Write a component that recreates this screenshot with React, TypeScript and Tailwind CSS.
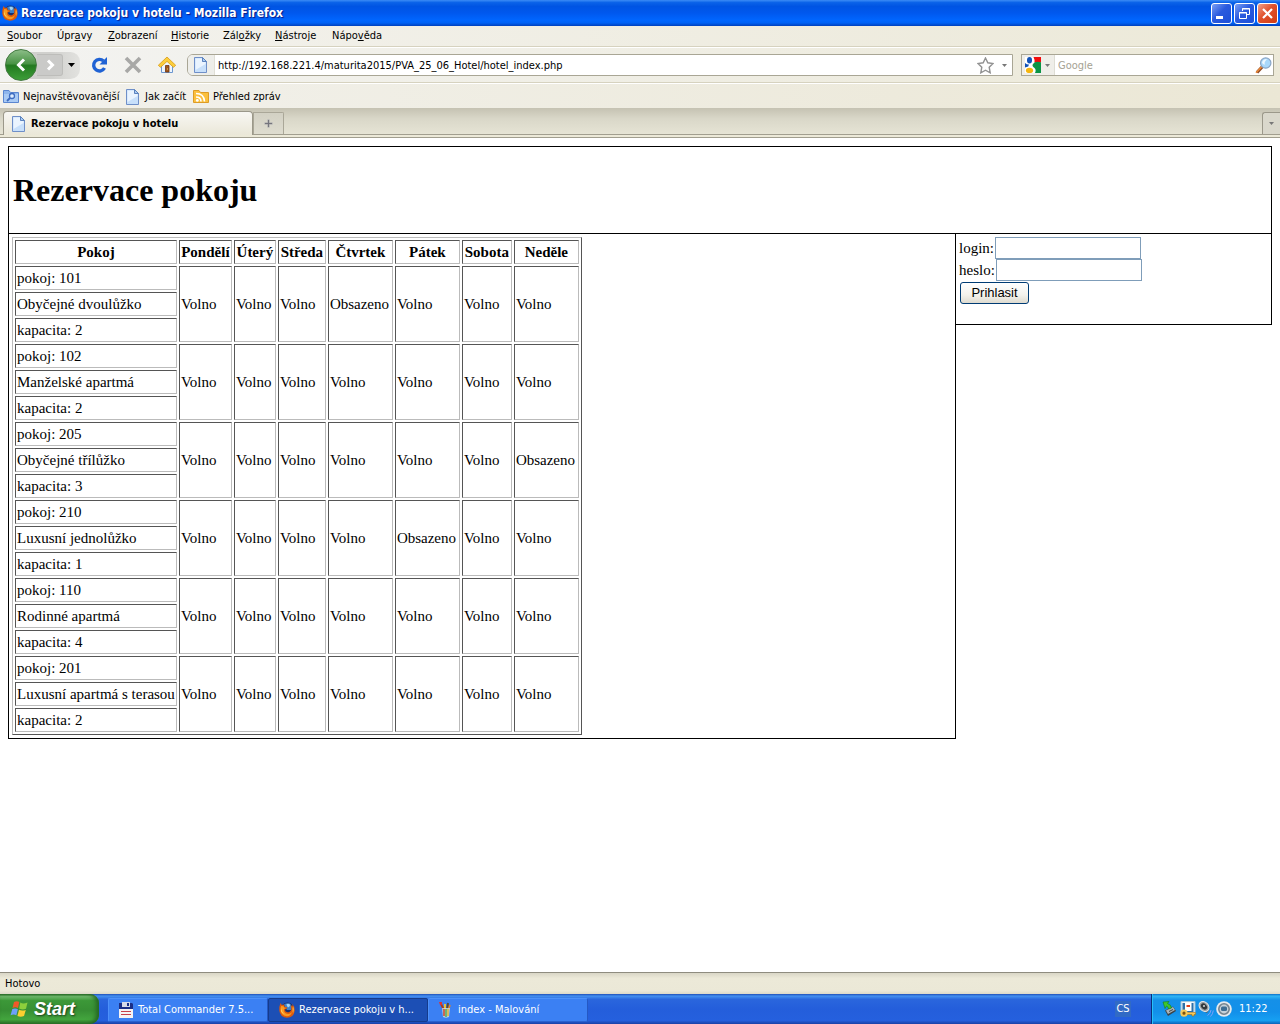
import React from "react";

const days = ["Pondělí", "Úterý", "Středa", "Čtvrtek", "Pátek", "Sobota", "Neděle"];

const rooms = [
  { number: 101, name: "Obyčejné dvoulůžko", capacity: 2, taken: [3] },
  { number: 102, name: "Manželské apartmá", capacity: 2, taken: [] },
  { number: 205, name: "Obyčejné třílůžko", capacity: 3, taken: [6] },
  { number: 210, name: "Luxusní jednolůžko", capacity: 1, taken: [4] },
  { number: 110, name: "Rodinné apartmá", capacity: 4, taken: [] },
  { number: 201, name: "Luxusní apartmá s terasou", capacity: 2, taken: [] },
] as { number: number; name: string; capacity: number; taken: number[] }[];

function FirefoxIcon() {
  return (
    <svg className="size-4 shrink-0" viewBox="0 0 16 16" aria-hidden="true">
      <circle cx="8.500" cy="7" r="6.500" fill="#17306f" />
      <path d="M5 2.500 Q8 .3 11.500 2 L13 5 L12 8 L8 8 L6 5Z" fill="#3a7fc8" />
      <path d="M7.500 2 L10.500 1.700 L11 4 L9 5.500 L8 4Z" fill="#9fd6f8" />
      <path d="M1.500 1 L2.800 3 L5 2.600 L5.500 4.500 L8.300 5.500 L7.500 7 L5.800 7.500 Q6 10 8.500 10.300 Q11.500 10.400 12.300 7.500 Q12.500 5 11.500 3 L13.500 4.500 L13.300 1.800 Q16 5 15.700 8.800 Q14.800 15.600 8 15.800 Q1 15.200 .3 8.500 Q0 4.500 1.500 1Z" fill="#dd5a0c" />
      <path d="M2.200 4 L4.600 4.200 L5 5.500 L7 6 L5 7 Q4.500 10 7 11.500 Q10.500 12.800 13 10 Q11.500 14.300 8 14.300 Q3 14 1.600 9 Q1.200 6 2.200 4Z" fill="#f99a22" />
      <path d="M2.300 6 Q2.600 10.500 6 12.800 Q3 12 2 9Z" fill="#ffd868" />
      <path d="M14 4 Q15.400 7 14.200 11 Q13.500 10 13.600 7 Z" fill="#ffd04c" />
    </svg>
  );
}

function PageIcon() {
  return (
    <svg className="size-4 shrink-0" viewBox="0 0 16 16" aria-hidden="true">
      <path d="M1.500 .5 H9.500 L13.500 4.500 V15.500 H1.500Z" fill="#c8e0fb" stroke="#6f8fc8" />
      <path d="M2.500 1.500 H9 V5 H12.500 V7 L2.500 13Z" fill="#eaf4ff" />
      <path d="M9.500 .5 V4.500 H13.500Z" fill="#a9cdf5" stroke="#5c82bd" />
    </svg>
  );
}

function FolderSearchIcon() {
  return (
    <svg className="size-4 shrink-0" viewBox="0 0 16 16" aria-hidden="true">
      <path d="M.5 1.500 H6 L7.500 3.500 H15.500 V13.500 H.5Z" fill="#8fb6ec" stroke="#5a86d0" />
      <path d="M1 5 H15 V13 H1Z" fill="#a9caf4" />
      <circle cx="9" cy="7" r="2.500" fill="#dcecff" stroke="#3d6cc0" strokeWidth="1.300" />
      <path d="M7 9 L4 12" stroke="#3d6cc0" strokeWidth="1.800" />
    </svg>
  );
}

function FeedIcon() {
  return (
    <svg className="size-4 shrink-0" viewBox="0 0 16 16" aria-hidden="true">
      <path d="M.5 1.500 H6 L7.500 3.500 H15.500 V13.500 H.5Z" fill="#fbc03e" stroke="#dd9c26" />
      <path d="M3 4.500 Q11 4.500 11.500 12.500 M3 8 Q8 8 8 12.500" fill="none" stroke="#fff" strokeWidth="1.600" />
      <circle cx="4.300" cy="11.400" r="1.400" fill="#fff" />
    </svg>
  );
}

function HomeIcon() {
  return (
    <svg className="h-[18px] w-[18px]" viewBox="0 0 18 18" aria-hidden="true">
      <path d="M3.500 9 V16.500 H14.500 V9 L9 4Z" fill="#eef5fd" stroke="#6c97cf" />
      <path d="M9 1 L17.700 9.300 L15.500 11.300 L9 5.400 L2.500 11.300 L.3 9.300Z" fill="#fcce3b" stroke="#d79a17" strokeWidth=".8" />
      <path d="M7.500 9.500 H11 V16 H7.500Z" fill="#a0561d" stroke="#6f3510" strokeWidth=".8" />
      <path d="M9 13 h1" stroke="#ffd04a" />
    </svg>
  );
}

function ReloadIcon() {
  return (
    <svg className="h-[18px] w-[18px]" viewBox="0 0 18 18" aria-hidden="true">
      <path d="M13.500 5 A5.800 5.800 0 1 0 14.500 12" fill="none" stroke="#1f62d4" strokeWidth="3.400" />
      <path d="M17 1 V8.500 H9.500Z" fill="#1f62d4" />
    </svg>
  );
}

function StopIcon() {
  return (
    <svg className="h-[18px] w-[18px]" viewBox="0 0 18 18" aria-hidden="true">
      <path d="M2 2 L16 16 M16 2 L2 16" stroke="#a8a8a6" strokeWidth="3.600" />
    </svg>
  );
}

function Chevron({ left = false }: { left?: boolean }) {
  return (
    <svg className="size-4" viewBox="0 0 16 16" aria-hidden="true">
      <path d={left ? "M11 2.500 L5.500 8 L11 13.500" : "M6 3.500 L10.500 8 L6 12.500"} fill="none" stroke="#fff" strokeWidth="3" />
    </svg>
  );
}

function Caret({ className = "h-1 w-[7px]" }: { className?: string }) {
  return (
    <svg className={className} viewBox="0 0 7 4" aria-hidden="true">
      <path d="M0 0 H7 L3.500 4Z" fill="currentColor" />
    </svg>
  );
}

function StarIcon() {
  return (
    <svg className="h-[17px] w-[17px]" viewBox="0 0 17 17" aria-hidden="true">
      <path d="M8.500 1 L10.800 5.800 L16 6.500 L12.200 10.200 L13.200 15.800 L8.500 13.200 L3.800 15.800 L4.800 10.200 L1 6.500 L6.200 5.800Z" fill="#fff" stroke="#929292" strokeWidth="1.400" />
    </svg>
  );
}

function GoogleIcon() {
  return (
    <svg className="size-4" viewBox="0 0 16 16" aria-hidden="true">
      <path d="M0 0H16V16H0Z" fill="#fff" />
      <path d="M8.500 0 H16 V5.500 H9.500 Q10 3 8.500 0Z" fill="#f20d0d" />
      <path d="M9.500 5.500 Q12 4 16 5.300 V16 H10 Q11.500 13 9.500 11 Q6.500 9 8 7Z" fill="#0a9445" />
      <ellipse cx="4.500" cy="3.200" rx="2.500" ry="3.200" fill="#1152b8" />
      <path d="M0 6 Q2 7.800 4 7.600 L3.200 9.400 L0 10.500Z" fill="#1152b8" />
      <ellipse cx="4.500" cy="13.400" rx="3.600" ry="2.600" fill="#f5b50f" />
    </svg>
  );
}

function MagnifierIcon() {
  return (
    <svg className="h-[17px] w-[17px]" viewBox="0 0 17 17" aria-hidden="true">
      <path d="M7.500 9.500 L2 15.500" stroke="#8a4420" strokeWidth="3.200" />
      <path d="M7 9.500 L1 15.800" stroke="#e8893a" strokeWidth="1.600" />
      <circle cx="10.700" cy="6" r="5.200" fill="#a9d8fb" stroke="#8ba6c6" strokeWidth="1.200" />
      <path d="M7 6 Q7.500 2 12 2 Q9.500 4 9.500 8Z" fill="#eef8ff" />
    </svg>
  );
}

function WindowsFlag() {
  return (
    <svg className="h-[18px] w-[19px]" viewBox="0 0 19 18" aria-hidden="true">
      <path d="M4 2 Q7 .3 9.300 2 L8 8 Q5.500 6.600 2.500 8Z" fill="#f0592a" />
      <path d="M10.300 2.600 Q13 4.300 17.500 2.600 L16 8.800 Q12.500 10.200 9.200 8.600Z" fill="#8ccf3c" />
      <path d="M2.300 9 Q5.300 7.700 7.900 9.200 L6.300 15.300 Q3.600 13.800 .6 15.300Z" fill="#6da0fa" />
      <path d="M9 9.800 Q12 11.300 15.800 9.900 L14 16 Q10.600 17.500 7.400 15.900Z" fill="#fbcf30" />
    </svg>
  );
}

function FloppyIcon() {
  return (
    <svg className="size-4 shrink-0" viewBox="0 0 16 16" aria-hidden="true">
      <path d="M1 1H14L15 2V15H1Z" fill="#1b2f86" />
      <path d="M4 0H12V5H4Z" fill="#d7dce8" />
      <path d="M9 1H11V4H9Z" fill="#1b2f86" />
      <path d="M1 7H15V16H1Z" fill="#f6f3f3" />
      <path d="M3 9.500H13M3 12.500H13" stroke="#c8404a" />
    </svg>
  );
}

function PaintIcon() {
  return (
    <svg className="size-4 shrink-0" viewBox="0 0 16 16" aria-hidden="true">
      <path d="M6 8 L3 2" stroke="#aa3c1c" strokeWidth="2" />
      <path d="M1 0h3v3H2Z" fill="#d33" />
      <path d="M7 8 L7 2" stroke="#e7c23e" strokeWidth="2" />
      <path d="M9 8 L10 1" stroke="#5b4a38" strokeWidth="2" />
      <path d="M10 9 L12 3" stroke="#e78323" strokeWidth="1.600" />
      <path d="M4 6H12L11 15Q8 16.500 5 15Z" fill="#c9d7df" fillOpacity=".85" />
      <path d="M6 7V14" stroke="#d54625" strokeWidth="1.500" />
      <path d="M8 7V15" stroke="#48a83f" strokeWidth="1.300" />
      <path d="M10 7V14" stroke="#e6b830" strokeWidth="1.500" />
    </svg>
  );
}

function SafeRemoveIcon() {
  return (
    <svg className="size-4" viewBox="0 0 16 16" aria-hidden="true">
      <path d="M3 9.500 L11 5.500 L14 10 L6 15Z" fill="#3b4449" />
      <path d="M4 9.500 L11 6 L13 9 L6 13Z" fill="#aab4b8" />
      <path d="M7 10.500 L11 8.500" stroke="#3b4449" />
      <path d="M1 1 L7 .5 L5.500 2.500 Q9 3.500 9.500 7 L6.500 8 Q6.500 6 4.500 5 L3 7.500Z" fill="#3fc62d" stroke="#157e18" strokeWidth=".6" />
    </svg>
  );
}

function KeyIcon() {
  return (
    <svg className="size-4" viewBox="0 0 16 16" aria-hidden="true">
      <path d="M1 .5H15V12.500H1Z" fill="#e9f2f7" stroke="#9fc4dc" />
      <path d="M2.500 2H13.500V11H2.500Z" fill="#2d6fa8" />
      <path d="M5 1.500H11.500V10H5Z" fill="#fff" />
      <path d="M6.500 4h3.500v2H6.500Z" fill="#e2401c" />
      <path d="M6 11.500H15.500V13.500H14V15H12V13.500H6Z" fill="#f4c95a" stroke="#a7700f" strokeWidth=".6" />
      <circle cx="4" cy="12.200" r="2.600" fill="#7a5310" stroke="#f4c95a" strokeWidth="2" />
    </svg>
  );
}

function SpeakerIcon() {
  return (
    <svg className="size-4" viewBox="0 0 16 16" aria-hidden="true">
      <path d="M4 1 L10 2 L11 9 L9 12 L5 10Z" fill="#5c6165" />
      <ellipse cx="6" cy="5.500" rx="5.500" ry="4.300" transform="rotate(45 6 5.500)" fill="#9aa0a4" stroke="#e2e5e7" />
      <ellipse cx="6" cy="5.500" rx="3.500" ry="2.600" transform="rotate(45 6 5.500)" fill="#33383c" />
      <circle cx="6" cy="5" r="1" fill="#d5dadd" />
      <path d="M9.500 14.500 Q12.500 13 13 9 M12.500 15.500 Q15 13 15.300 9.500" fill="none" stroke="#7f9ff8" />
    </svg>
  );
}

function DiscIcon() {
  return (
    <svg className="size-4" viewBox="0 0 16 16" aria-hidden="true">
      <circle cx="8" cy="8" r="7.800" fill="#e6eaee" />
      <circle cx="8" cy="8" r="5.200" fill="#c4d0d9" stroke="#76838e" strokeWidth="1.600" />
      <rect x="5" y="5.500" width="6" height="4.500" rx="1.500" fill="#3f6d92" />
    </svg>
  );
}

function TitleBar() {
  const box = "flex h-[21px] w-[21px] items-center justify-center rounded-[3px] border border-white";
  return (
    <header className="flex h-[26px] shrink-0 items-center bg-[linear-gradient(#3c8cf5_0%,#0a62e8_10%,#0054e3_25%,#0058ee_50%,#0066ff_78%,#0062f5_88%,#0040bd_100%)] pr-[2px] pl-[2px]">
      <FirefoxIcon />
      <h1 className="ml-[3px] flex-1 font-['DejaVu_Sans_Condensed','DejaVu_Sans',sans-serif] text-[12px] font-bold whitespace-nowrap text-white [text-shadow:1px_1px_1px_#0a1883]">
        Rezervace pokoju v hotelu - Mozilla Firefox
      </h1>
      <div className="flex gap-[2px]">
        <button aria-label="Minimalizovat" className={`${box} bg-[linear-gradient(135deg,#7ba0f5,#2a5ade_45%,#1c4fd8)]`}>
          <svg className="size-[15px]" viewBox="0 0 15 15"><path d="M2 10H9V13H2Z" fill="#fff" /></svg>
        </button>
        <button aria-label="Obnovit" className={`${box} bg-[linear-gradient(135deg,#7ba0f5,#2a5ade_45%,#1c4fd8)]`}>
          <svg className="size-[15px]" viewBox="0 0 15 15"><path d="M5.500 5V2.500H12.500V8.500H10M5 3H13M2.500 6.500H9.500V12.500H2.500ZM2 7H10" fill="none" stroke="#fff" /></svg>
        </button>
        <button aria-label="Zavřít" className={`${box} bg-[linear-gradient(135deg,#f0a08a,#e0512c_45%,#d03c14)]`}>
          <svg className="size-[15px]" viewBox="0 0 15 15"><path d="M3 3L12 12M12 3L3 12" stroke="#fff" strokeWidth="2.200" /></svg>
        </button>
      </div>
    </header>
  );
}

function MenuBar() {
  const items: [string, string, string, string][] = [
    ["", "S", "oubor", "w-[50px]"],
    ["Úpr", "a", "vy", "w-[51px]"],
    ["", "Z", "obrazení", "w-[63px]"],
    ["", "H", "istorie", "w-[52px]"],
    ["Zál", "o", "žky", "w-[52px]"],
    ["", "N", "ástroje", "w-[57px]"],
    ["Nápo", "v", "ěda", "w-[60px]"],
  ];
  return (
    <nav className="flex h-[21px] shrink-0 items-center border-b border-[#d6d2bf] bg-[linear-gradient(90deg,#f3f2ee,#ece9d8)] pl-[7px]">
      {items.map(([a, b, c, w]) => (
        <button key={b + c} className={`${w} text-left whitespace-nowrap`}>
          {a}<u>{b}</u>{c}
        </button>
      ))}
    </nav>
  );
}

function NavBar() {
  return (
    <div className="flex h-9 shrink-0 items-center border-t border-b border-t-white border-b-[#d6d2bf] bg-[linear-gradient(90deg,#f3f3f1,#ece9d8)] pr-[6px] pl-[5px]">
      <div className="flex h-[27px] w-[75px] shrink-0 items-center rounded-l-[14px] rounded-r-[10px] bg-[linear-gradient(90deg,#d0d0cd_60%,#e2e2df)]">
        <button aria-label="Zpět" className="flex size-8 shrink-0 items-center justify-center rounded-full border border-[#437a41] bg-[linear-gradient(#8bbd87_0%,#4b9447_45%,#237a20_52%,#3d9e38_100%)]">
          <Chevron left />
        </button>
        <button aria-label="Vpřed" className="flex h-[22px] w-[26px] items-center justify-center rounded-r-[3px] border border-l-0 border-[#bdbdba] bg-[#cacac8]">
          <Chevron />
        </button>
        <button aria-label="Historie stránek" className="flex flex-1 justify-center text-black"><Caret /></button>
      </div>
      <button aria-label="Obnovit stránku" className="ml-[10px]"><ReloadIcon /></button>
      <button aria-label="Zastavit" className="ml-4"><StopIcon /></button>
      <button aria-label="Domů" className="ml-4"><HomeIcon /></button>
      <div className="ml-[11px] flex h-[22px] flex-1 items-center rounded-l-[6px] border border-[#a9a695] bg-white">
        <div className="flex h-full w-[27px] items-center justify-center rounded-l-[5px] border-r border-[#e0dfd6] bg-[#eeeeea]"><PageIcon /></div>
        <input aria-label="Adresa" defaultValue="http://192.168.221.4/maturita2015/PVA_25_06_Hotel/hotel_index.php" className="h-full min-w-0 flex-1 pl-[3px] outline-none" />
        <button aria-label="Přidat záložku"><StarIcon /></button>
        <button aria-label="Zobrazit historii" className="mr-[5px] ml-2 text-[#777]"><Caret className="h-[3px] w-[5px]" /></button>
      </div>
      <div className="ml-2 flex h-[22px] w-[253px] items-center border border-[#a9a695] bg-white">
        <button aria-label="Vyhledávač" className="flex h-full w-[33px] items-center gap-1 border-r border-[#deddd4] bg-[#efeee9] pl-[3px] text-[#777]">
          <GoogleIcon /><Caret className="h-[3px] w-[5px]" />
        </button>
        <input aria-label="Hledat" placeholder="Google" className="h-full min-w-0 flex-1 pl-[3px] outline-none placeholder:text-[#a5a293]" />
        <button aria-label="Vyhledat" className="mr-px"><MagnifierIcon /></button>
      </div>
    </div>
  );
}

function BookmarkBar() {
  return (
    <nav className="flex h-[25px] shrink-0 items-center border-t border-white bg-[linear-gradient(90deg,#f2f1ec,#ebe7d5)] pt-[2px] pl-[3px] whitespace-nowrap">
      <a href="#nejnavstevovanejsi" className="flex w-[122px] items-center gap-1"><FolderSearchIcon />Nejnavštěvovanější</a>
      <a href="#jak-zacit" className="flex w-[68px] items-center gap-1"><PageIcon />Jak začít</a>
      <a href="#prehled-zprav" className="flex items-center gap-1"><FeedIcon />Přehled zpráv</a>
    </nav>
  );
}

function TabBar() {
  return (
    <div className="flex h-[30px] shrink-0 border-b border-[#a19e8f] bg-[#ece9d8] pb-[2px]">
      <div className="flex flex-1 items-end border-b border-[#a19e8f] bg-[linear-gradient(#c5c2b2,#d9d7c8_40%,#e6e4d5)] pl-[3px]">
        <button className="-mb-px flex h-6 w-[250px] items-center gap-1 rounded-t-[4px] border border-b-0 border-[#9b988a] bg-[linear-gradient(#f8f7f3,#eae7d8)] pl-[7px] font-bold whitespace-nowrap">
          <PageIcon />Rezervace pokoju v hotelu
        </button>
        <button aria-label="Nový panel" className="flex h-[22px] w-[31px] items-center justify-center rounded-tr-[2px] border border-b-0 border-[#aaa798] bg-[linear-gradient(#d3d1c4,#dedccf)]">
          <svg className="size-[9px]" viewBox="0 0 9 9"><path d="M3.500 .5h2v3h3v2h-3v3h-2v-3h-3v-2h3Z" fill="#a5a5aa" /><path d="M4.500 1v7M1 4.500h7" stroke="#75757c" /></svg>
        </button>
        <button aria-label="Seznam panelů" className="ml-auto flex h-[22px] w-[18px] items-center justify-center rounded-tl-[3px] border border-r-0 border-b-0 border-[#9b988a] bg-[#dad8cc] text-[#777]"><Caret className="h-[3px] w-[5px]" /></button>
      </div>
    </div>
  );
}

const cell = "h-6 border border-t-[#555] border-r-[#bbb] border-b-[#bbb] border-l-[#555] p-px leading-5 whitespace-nowrap";

function RoomTable() {
  return (
    <table className="border-separate border-spacing-[2px] border border-t-[#bbb] border-r-[#555] border-b-[#555] border-l-[#bbb]">
      <colgroup>
        <col className="w-[161px]" />
        <col className="w-[53px]" />
        <col className="w-[42px]" />
        <col className="w-[48px]" />
        <col className="w-[65px]" />
        <col className="w-[65px]" />
        <col className="w-[50px]" />
        <col className="w-[65px]" />
      </colgroup>
      <thead>
        <tr>
          <th className={cell}>Pokoj</th>
          {days.map((day) => <th key={day} className={cell}>{day}</th>)}
        </tr>
      </thead>
      <tbody>
        {rooms.map((room) => (
          <React.Fragment key={room.number}>
            <tr>
              <td className={cell}>pokoj: {room.number}</td>
              {days.map((day, i) => (
                <td key={day} rowSpan={3} className={cell}>{room.taken.includes(i) ? "Obsazeno" : "Volno"}</td>
              ))}
            </tr>
            <tr><td className={cell}>{room.name}</td></tr>
            <tr><td className={cell}>kapacita: {room.capacity}</td></tr>
          </React.Fragment>
        ))}
      </tbody>
    </table>
  );
}

function HotelPage() {
  return (
    <main className="min-h-0 flex-1 overflow-hidden bg-white px-2 pt-2 font-['Liberation_Serif',serif] text-[15px] leading-5">
      <div className="border border-black px-1 pt-6 pb-6">
        <h2 className="text-[32px] leading-[38px] font-bold">Rezervace pokoju</h2>
      </div>
      <div className="flex items-start">
        <section className="w-3/4 border border-t-0 border-black p-[3px]">
          <RoomTable />
        </section>
        <form className="w-1/4 border-r border-b border-black px-[3px] pt-[3px] pb-5" onSubmit={(e) => e.preventDefault()}>
          <div className="flex items-center gap-px">
            <label htmlFor="login">login:</label>
            <input id="login" className="h-[22px] w-[146px] border border-[#7f9db9] px-1" />
          </div>
          <div className="flex items-center gap-px">
            <label htmlFor="heslo">heslo:</label>
            <input id="heslo" type="password" className="h-[22px] w-[146px] border border-[#7f9db9] px-1" />
          </div>
          <button className="mt-px ml-px block h-[22px] w-[69px] rounded-[3px] border border-[#003c74] bg-[linear-gradient(#fff,#f3f2ec_60%,#dedbd0)] font-['Liberation_Sans',sans-serif] text-[13px] leading-5">Prihlasit</button>
        </form>
      </div>
    </main>
  );
}

function Taskbar() {
  const task = "flex h-6 w-[160px] items-center gap-1 rounded-[2px] border pl-[9px] whitespace-nowrap text-white";
  return (
    <footer className="flex h-[30px] shrink-0 items-stretch bg-[linear-gradient(#1f4fb8_0%,#4490f0_7%,#2a66dd_18%,#245edb_50%,#2560de_88%,#1941a5_100%)]">
      <button className="flex w-[99px] items-center gap-[5px] rounded-r-[9px] bg-[linear-gradient(#2c6f2b_0%,#73bd70_8%,#3c9838_22%,#378f34_55%,#43a53e_85%,#2c7329_100%)] pl-[10px] font-['Liberation_Sans',sans-serif] text-[18px] font-bold text-white italic shadow-[inset_-3px_0_4px_#256623] [text-shadow:1px_1px_2px_#1c3f1b]">
        <WindowsFlag />Start
      </button>
      <div className="ml-[9px] flex flex-1 items-center pt-px">
        <button className={`${task} border-[#4d91fa] border-r-[#2458c4] border-b-[#2a62cf] bg-[#3b80f3]`}><FloppyIcon />Total Commander 7.5...</button>
        <button className={`${task} border-[#153b8c] bg-[#1c4fb5] pl-[10px]`}><FirefoxIcon />Rezervace pokoju v h...</button>
        <button className={`${task} border-[#4d91fa] border-r-[#2458c4] border-b-[#2a62cf] bg-[#3b80f3]`}><PaintIcon />index - Malování</button>
      </div>
      <button aria-label="Jazyk: CS" className="mr-5 h-4 w-4 self-center bg-[#316ac5] text-center text-white">CS</button>
      <div className="flex w-[129px] items-center gap-[2px] border-l border-[#092e7a] bg-[linear-gradient(#0d6fc8_0%,#31b6f5_7%,#1590e8_20%,#1290ea_60%,#16a0f2_88%,#0b62b8_100%)] pl-[10px] text-white shadow-[inset_1px_0_0_#27c1f8]">
        <SafeRemoveIcon /><KeyIcon /><SpeakerIcon /><DiscIcon />
        <time className="ml-[5px]">11:22</time>
      </div>
    </footer>
  );
}

export default function App() {
  return (
    <div className="flex h-screen flex-col bg-white font-['DejaVu_Sans_Condensed','DejaVu_Sans',sans-serif] text-[11px] leading-4 text-black">
      <TitleBar />
      <MenuBar />
      <NavBar />
      <BookmarkBar />
      <TabBar />
      <HotelPage />
      <div role="status" className="flex h-[22px] shrink-0 items-center border-t border-[#8f8c7f] bg-[linear-gradient(#d9d6c6,#ece9d8_25%,#ebe8d7_85%,#dcd9c9)] pl-[5px]">Hotovo</div>
      <Taskbar />
    </div>
  );
}
